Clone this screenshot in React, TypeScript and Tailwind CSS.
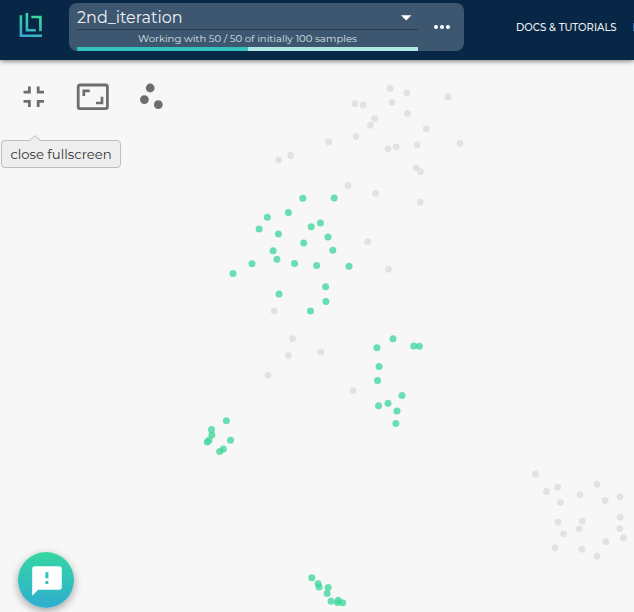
const grayPoints = [
  [390.2, 88.5], [406.8, 93], [448, 97], [354.8, 103.7], [363.2, 105], [392, 102.4],
  [407.5, 113.5], [374.7, 118.6], [370.4, 125.2], [426.2, 129], [356, 136.5], [328.8, 142],
  [388, 148.8], [396.2, 146.8], [417.1, 144.8], [460, 143.5], [278.7, 160], [290.7, 155.5],
  [416.1, 167.8], [420.5, 171.7], [348, 185.4], [375.7, 193.4], [420.4, 202.2],
  [367.8, 241.7], [388.6, 269.2], [274.2, 311], [292.6, 338.7], [288.4, 355.5],
  [320.8, 352.2], [268, 375.3], [353, 390.6], [535.5, 474], [546.5, 491.5], [557.7, 487.2],
  [580.1, 494.6], [597, 484.3], [560.4, 502.4], [605.2, 500.5], [619.9, 496.8], [558, 522.2],
  [582.2, 521], [579.1, 528.8], [563.5, 533.8], [620.2, 517.2], [619.7, 528.6], [623.4, 537.7],
  [605.8, 541.6], [555, 547.7], [581.9, 549.2], [597, 556.2],
];

const greenPoints = [
  [302.8, 198.3], [334.2, 197.9], [288.4, 212.4], [267.3, 217.3], [259.1, 229], [278.4, 234],
  [311.2, 226.7], [320.4, 222.9], [328, 236.9], [303.7, 243.1], [273.1, 250.8], [332.8, 250.2],
  [276.9, 259.3], [252, 263.7], [294.5, 263.4], [316.6, 265.6], [349, 266.2], [233, 273.6],
  [279, 293.9], [325.6, 286.7], [325.9, 301.6], [310.4, 310.9], [393, 338.8], [376.9, 347.8],
  [413.7, 345.9], [419.4, 346.3], [379.1, 366.5], [377.5, 380.4], [402, 395.4], [388, 403.2],
  [378.6, 405.7], [397, 410.9], [395.9, 423.4], [226.4, 420.7], [211.5, 429.5], [211.9, 435],
  [209, 440.3], [207.3, 442], [230.5, 440.2], [223.4, 449], [219.7, 451.4],
  [311.8, 577.8], [318.1, 583.7], [319.1, 587], [328.1, 587.5], [327.1, 593.6],
  [331, 601.3], [338.2, 600.3], [337.6, 602.5], [342.7, 602.7],
];

function Logo() {
  return (
    <svg className="h-[26px] w-6 shrink-0" viewBox="19 12 24 26" fill="none" stroke="url(#logo)" strokeWidth="2.6">
      <defs>
        <linearGradient id="logo" gradientUnits="userSpaceOnUse" x1="36" y1="13" x2="26" y2="38">
          <stop stopColor="#3ddc97" />
          <stop offset="1" stopColor="#36a9d0" />
        </linearGradient>
      </defs>
      <path d="M20.9 15.2V35.8H42M26.9 13V30.2H35.8M31.3 17H40.4V31.3" />
    </svg>
  );
}

function Header() {
  return (
    <header className="relative z-10 flex h-[59.5px] items-start bg-[#082645] pl-[19px] text-[#eef2f5] shadow-[0_1px_5px_rgba(0,0,0,0.55)]">
      <div className="pt-3"><Logo /></div>
      <div className="ml-[26px] mt-[3px] flex h-12 w-[395px] shrink-0 rounded-[8px] bg-[#3e5770] pl-2">
        <div className="flex w-[341px] flex-col">
          <div className="flex h-[27px] items-center justify-between border-b border-[#263c53]">
            <span className="pt-[3px] text-[16px] leading-none">2nd_iteration</span>
            <svg className="mr-[6px] mt-[3px] h-[6px] w-[11px]" viewBox="0 0 11 6"><path d="M0 .3h10.4L5.2 5.5z" fill="white" /></svg>
          </div>
          <div className="flex h-[17px] items-center justify-center pt-px text-[10.05px] text-[#dbe2e8]">
            <span className="whitespace-nowrap">Working with 50 / 50 of initially 100 samples</span>
          </div>
          <div className="h-1 bg-[#b2e8e4]"><div className="h-full w-1/2 bg-[#33c1bd]" /></div>
        </div>
        <div className="ml-[15.5px] mt-[22px] flex gap-[1.8px]">
          <i className="size-[4.4px] rounded-full bg-white" />
          <i className="size-[4.4px] rounded-full bg-white" />
          <i className="size-[4.4px] rounded-full bg-white" />
        </div>
      </div>
      <nav className="ml-[52px] mt-[20px] flex gap-[16px] whitespace-nowrap text-[10.1px] leading-4 font-medium">
        <span>DOCS &amp; TUTORIALS</span>
        <span>L</span>
      </nav>
    </header>
  );
}

function Toolbar() {
  return (
    <div className="flex h-[74px] items-center pl-[23px] text-[#6e6e6e]">
      <svg className="h-[22px] w-[22px]" viewBox="0 0 22 22" fill="none" stroke="currentColor" strokeWidth="2.8">
        <path d="M.5 6.2H6.4V.5M15.2 .5V6.2H21M.5 15.4H6.4V21M15.2 21V15.4H21" />
      </svg>
      <svg className="ml-[31px] h-7 w-[34px]" viewBox="0 0 34 28" fill="none" stroke="currentColor">
        <rect x="2.2" y="2" width="29.2" height="23.6" rx="1.8" strokeWidth="2.8" />
        <path d="M7.8 13V7.8H13.8M20 20H26V13.8" strokeWidth="2.7" />
      </svg>
      <svg className="ml-[29px] h-7 w-6" viewBox="0 0 24 28" fill="currentColor">
        <circle cx="11.2" cy="5" r="4.4" /><circle cx="5.4" cy="16.6" r="4.4" /><circle cx="19.3" cy="21.7" r="4.4" />
      </svg>
    </div>
  );
}

export default function App() {
  return (
    <div className="relative h-[612px] w-[634px] overflow-hidden bg-[#f7f7f7] font-['Montserrat',Inter,sans-serif]">
      <Header />
      <svg className="absolute inset-0 h-full w-full" viewBox="0 0 634 612">
        {grayPoints.map(([x, y]) => <circle key={`${x}-${y}`} cx={x} cy={y} r="3.4" fill="#e2e2e2" />)}
        {greenPoints.map(([x, y]) => <circle key={`${x}-${y}`} cx={x} cy={y} r="3.5" fill="#3dd79b" fillOpacity=".76" />)}
      </svg>
      <Toolbar />
      <div className="relative ml-px mt-[6.5px] flex h-7 w-[120px] items-center justify-center rounded-[4px] border border-[#bebebe] bg-[#eeeeee] pt-px text-[13.2px] text-[#333333]">
        <svg className="absolute -top-[6px] left-[27px] h-[7px] w-3" viewBox="0 0 12 7">
          <path d="M0 6.5L6 .7L12 6.5V7H0z" fill="#eeeeee" />
          <path d="M0 5.8L6 .7L12 5.8" fill="none" stroke="#bebebe" />
        </svg>
        <span className="whitespace-nowrap">close fullscreen</span>
      </div>
      <button aria-label="Feedback" className="absolute left-[18px] top-[552px] flex size-14 items-center justify-center rounded-full bg-linear-to-b from-[#36d6a0] to-[#30add0] pl-px pt-px shadow-[0_3px_9px_rgba(0,0,0,0.35)]">
        <svg className="h-[30px] w-[30px]" viewBox="0 0 30 30" fill="white">
          <path fillRule="evenodd" d="M3 .2H27A2.8 2.8 0 0 1 29.8 3V21A2.8 2.8 0 0 1 27 23.8H6.2L.2 29.8V3A2.8 2.8 0 0 1 3 .2ZM13.4 6.2V12.2H16.4V6.2ZM13.4 15V18H16.4V15Z" />
        </svg>
      </button>
    </div>
  );
}
